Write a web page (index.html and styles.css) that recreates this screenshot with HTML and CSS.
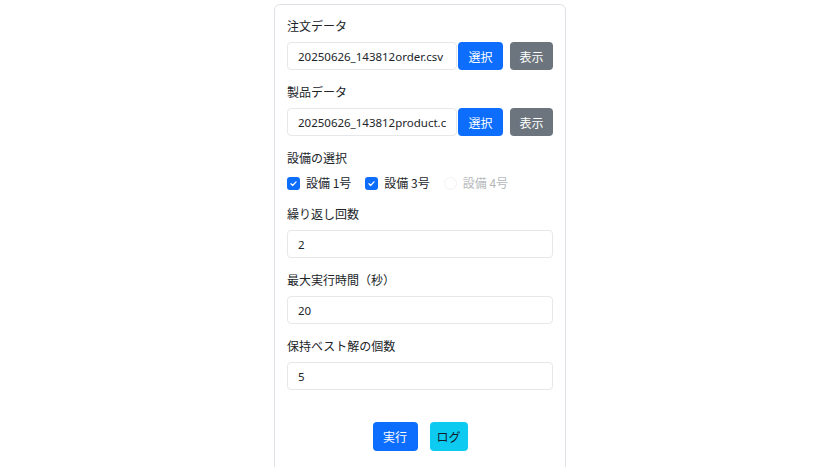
FILE: index.html
```html
<!DOCTYPE html>
<html lang="ja">
<head>
<meta charset="utf-8">
<title>設定</title>
<link rel="stylesheet" href="styles.css">
</head>
<body>
<div class="card">
  <div class="field">
    <div class="label">注文データ</div>
    <div class="file-row">
      <input class="input" type="text" value="20250626_143812order.csv" readonly>
      <button class="btn btn-primary btn-select">選択</button>
      <button class="btn btn-secondary btn-show">表示</button>
    </div>
  </div>
  <div class="field">
    <div class="label">製品データ</div>
    <div class="file-row">
      <input class="input" type="text" value="20250626_143812product.csv" readonly>
      <button class="btn btn-primary btn-select">選択</button>
      <button class="btn btn-secondary btn-show">表示</button>
    </div>
  </div>
  <div class="field">
    <div class="label">設備の選択</div>
    <div class="checks">
      <label class="check">
        <span class="box checked"><svg viewBox="0 0 16 16" width="9" height="9"><path d="M3.5 8.5l3 3 6-6.5" fill="none" stroke="#fff" stroke-width="2.2" stroke-linecap="round" stroke-linejoin="round"/></svg></span>
        <span>設備 1号</span>
      </label>
      <label class="check">
        <span class="box checked"><svg viewBox="0 0 16 16" width="9" height="9"><path d="M3.5 8.5l3 3 6-6.5" fill="none" stroke="#fff" stroke-width="2.2" stroke-linecap="round" stroke-linejoin="round"/></svg></span>
        <span>設備 3号</span>
      </label>
      <label class="check disabled">
        <span class="box off"></span>
        <span>設備 4号</span>
      </label>
    </div>
  </div>
  <div class="field">
    <div class="label">繰り返し回数</div>
    <input class="input full" type="text" value="2">
  </div>
  <div class="field">
    <div class="label">最大実行時間（秒）</div>
    <input class="input full" type="text" value="20">
  </div>
  <div class="field">
    <div class="label">保持ベスト解の個数</div>
    <input class="input full" type="text" value="5">
  </div>
  <div class="actions">
    <button class="btn btn-primary btn-run">実行</button>
    <button class="btn btn-info btn-log">ログ</button>
  </div>
</div>
</body>
</html>
```

FILE: styles.css
```css
* { box-sizing: border-box; }
html, body { margin: 0; padding: 0; background: #fff; }
html { overflow: hidden; }
body {
  font-family: "Noto Sans", "Noto Sans CJK JP", sans-serif;
  font-size: 12px;
  color: #212529;
}
.card {
  width: 292px;
  height: 470px;
  margin: 4px auto 0;
  border: 1px solid #dee2e6;
  border-radius: 6px;
  padding: 12px 12px 0;
}
.field { margin-bottom: 13px; }
.label {
  font-family: "Noto Sans CJK JP", sans-serif;
  font-size: 12px;
  line-height: 18px;
  margin-bottom: 7px;
  color: #212529;
}
.file-row {
  display: flex;
  align-items: stretch;
}
.input {
  height: 28px;
  border: 1px solid #e5e8eb;
  border-radius: 4px;
  padding: 0 10px;
  font-family: "Noto Sans", "Noto Sans CJK JP", sans-serif;
  font-size: 11.5px;
  color: #212529;
  background: #fff;
  outline: none;
  min-width: 0;
}
.file-row .input { flex: 1; }
.input.full { display: block; width: 100%; }
.btn {
  height: 28px;
  border: none;
  border-radius: 4px;
  font-family: "Noto Sans CJK JP", sans-serif;
  font-size: 12px;
  color: #fff;
  padding: 0;
  cursor: pointer;
}
.btn-primary { background: #0d6efd; }
.btn-secondary { background: #6c757d; }
.btn-info { background: #0dcaf0; color: #10202a; }
.btn-select { width: 45px; margin-left: 1px; }
.btn-show { width: 43px; margin-left: 7px; }
.checks {
  display: flex;
  align-items: center;
  gap: 14px;
  height: 18px;
}
.check {
  display: inline-flex;
  align-items: center;
  gap: 6px;
  font-family: "Noto Sans CJK JP", sans-serif;
  font-size: 12px;
  line-height: 18px;
}
.box {
  width: 13px;
  height: 13px;
  border-radius: 3px;
  display: inline-flex;
  align-items: center;
  justify-content: center;
}
.box.checked { background: #0d6efd; }
.box.off { border: 1px solid #f1f2f4; border-radius: 50%; }
.check.disabled { color: #b5b8bb; }
.actions {
  display: flex;
  justify-content: center;
  gap: 12px;
  margin-top: 32px;
}
.btn-run { width: 45px; height: 29px; }
.btn-log { width: 38px; height: 29px; }
```
